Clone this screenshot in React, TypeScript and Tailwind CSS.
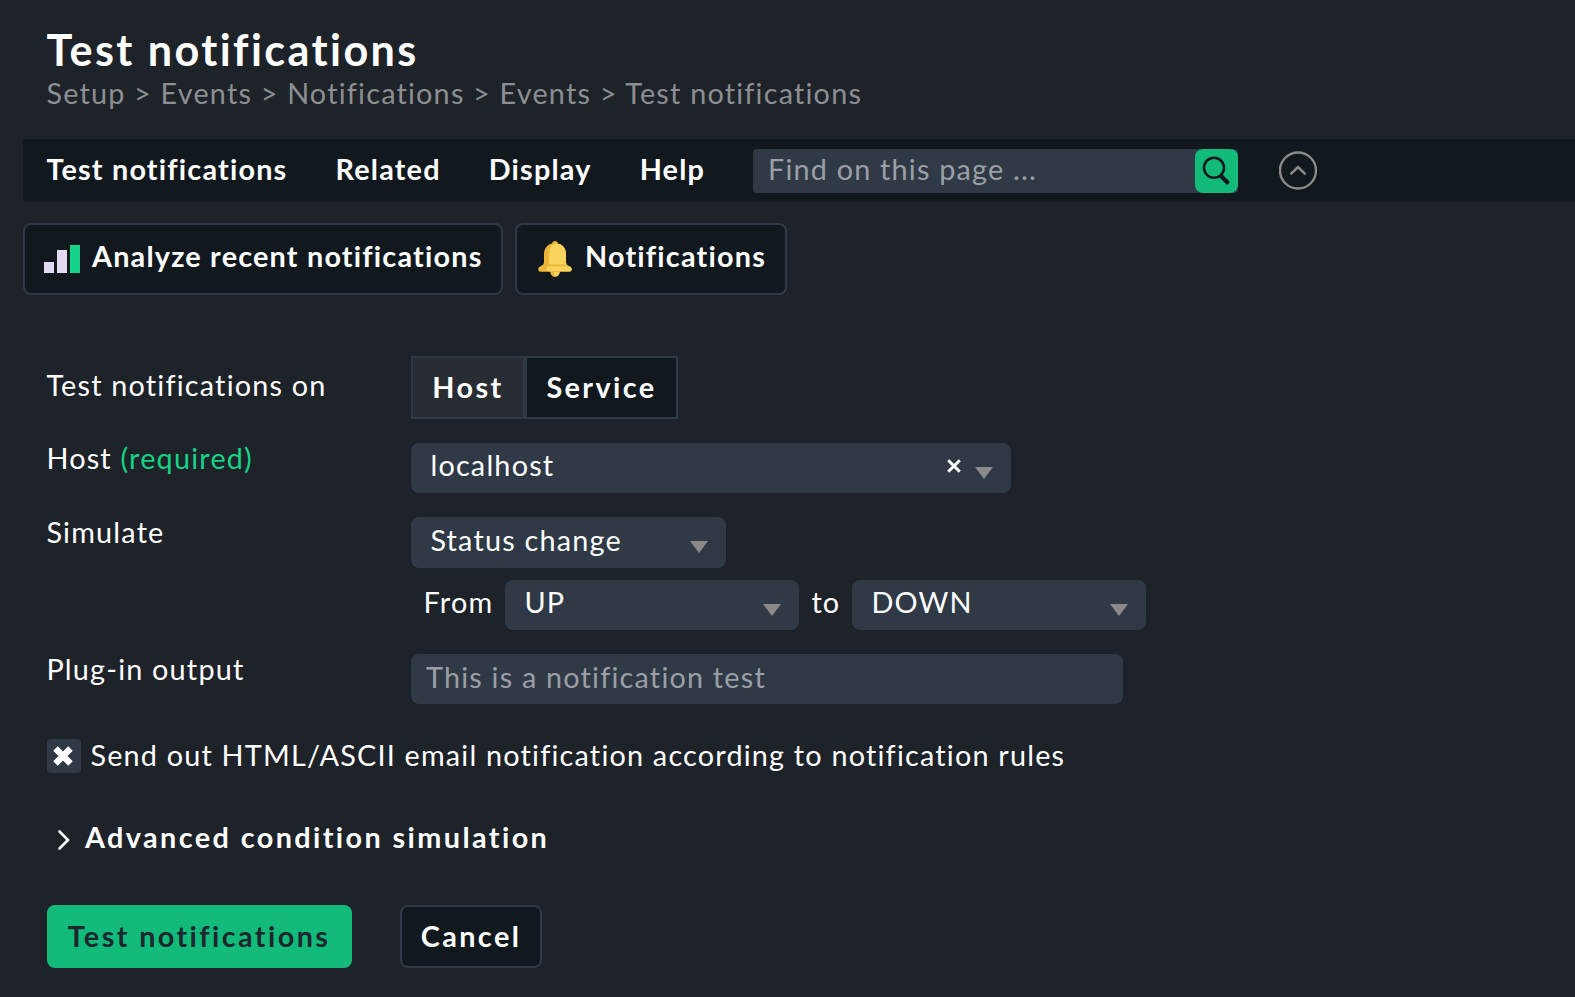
import React from "react";

function Caret({ className = "" }: { className?: string }) {
  return (
    <svg className={`h-3 w-[18px] shrink-0 ${className}`} viewBox="0 0 18 12">
      <path d="M0 0h18L9 12z" fill="#8b8a89" />
    </svg>
  );
}

function Select({ value, className, clearable = false }: { value: string; className: string; clearable?: boolean }) {
  return (
    <button className={`flex items-center rounded-lg bg-[#303946] pr-[18px] pl-[19.4px] text-left ${className}`}>
      <span className="mb-1.5 grow">{value}</span>
      {clearable && (
        <svg className="mr-[14px] mb-[5px] h-[14px] w-[14px]" viewBox="0 0 14 14" stroke="#fff" strokeWidth="3">
          <path d="M1.2 1.200l11.600 11.600M12.800 1.200L1.200 12.800" />
        </svg>
      )}
      <Caret className="mt-[9px]" />
    </button>
  );
}

const menu = ["Test notifications", "Related", "Display", "Help"];

export default function App() {
  return (
    <div className="h-[997px] w-[1575px] overflow-hidden bg-[#1e2229] font-['Lato',sans-serif] text-[28.8px] leading-9 tracking-[1.2px] whitespace-nowrap text-white">
      <header className="h-[139px] pt-[23px] pl-[46.4px]">
        <h1 className="text-[43.2px] leading-[52px] font-bold tracking-[2.4px]">Test notifications</h1>
        <p className="text-[#8c8f91]">Setup &gt; Events &gt; Notifications &gt; Events &gt; Test notifications</p>
      </header>

      <nav className="ml-[23px] flex h-[63px] items-center rounded-l bg-[#11181e] pl-[23.4px]">
        <div className="mb-[3px] flex w-[706.6px] gap-[48px] font-bold">
          {menu.map((m) => (
            <span key={m}>{m}</span>
          ))}
        </div>
        <div className="flex h-11 w-[485px] items-center justify-between rounded-[4px] bg-[#303946]">
          <span className="mb-[3px] pl-[15px] text-[#9b9fa5]">Find on this page ...</span>
          <button className="h-11 w-[43px] rounded-lg bg-[#13bb7b]">
            <svg viewBox="0 0 43 44" fill="none" stroke="#11181e">
              <circle cx="19" cy="18.8" r="10" strokeWidth="2.6" />
              <path d="M25.5 26.500l8 8" strokeWidth="4.2" />
            </svg>
          </button>
        </div>
        <svg className="ml-[41px] h-10 w-10" viewBox="0 0 40 40" fill="none" stroke="#8c8a89">
          <circle cx="19" cy="19.5" r="18" strokeWidth="2.4" />
          <path d="M12.2 22.600l6.800-6.600 6.800 6.600" strokeWidth="2.600" strokeLinecap="round" />
        </svg>
      </nav>

      <div className="mt-[21px] ml-[23px] flex gap-3 font-bold">
        <button className="flex h-[72px] w-[480px] items-center rounded-lg border-2 border-[#303946] bg-[#11181e] pl-[19px]">
          <svg className="h-9 w-9" viewBox="0 0 36 36">
            <path d="M0 21h10v11H0zM13 9h10v23H13z" fill="#e1daf1" />
            <path d="M26 4h10v28H26z" fill="#15d387" />
          </svg>
          <span className="mb-1.5 ml-3">Analyze recent notifications</span>
        </button>
        <button className="flex h-[72px] w-[272px] items-center rounded-lg border-2 border-[#303946] bg-[#11181e] pl-5">
          <svg className="h-9 w-9" viewBox="0 0 36 36">
            <path d="M13 29h10c0 4-2 7-5 7s-5-3-5-7z" fill="#edb637" />
            <path d="M17.500 31h5c0 3-2 4.500-3.500 4-2-.4-2.500-2-1.500-4z" fill="#f8d35e" />
            <path d="M18 0c1.800 0 2.700 1 2.900 2.500C26 3.500 29 8 29 13v8c0 2 1 3 3 4 2 .8 2.700 2 2.700 3.200S34 30.800 32.700 30.800H3.300C2 30.800 1.300 29.400 1.300 28.200S2 25.800 4 25s3-2 3-4v-8c0-5 3-9.500 8.100-10.500C15.300 1 16.200 0 18 0z" fill="#edb637" />
            <path d="M17.500 3C25 2 29 7 29 13v8c0 1 0 1.600.6 2.400H12.500c-.5-1-.5-1.400-.5-2.400v-7c0-5 1.500-10.200 5.500-11zM11 25.200h21.300c1.700.8 2.400 1.900 2.400 3s-.9 2-2 2H11c-2-.8-2-4 0-5z" fill="#f8d35e" />
          </svg>
          <span className="mb-1.5 ml-3">Notifications</span>
        </button>
      </div>

      <main className="pt-[61px] pl-[47px]">
        <div className="flex h-[87px]">
          <span className="mt-[11px] -ml-[0.6px] w-[364.6px]">Test notifications on</span>
          <div className="flex h-[63px] font-bold tracking-[2.4px]">
            <button className="w-[114px] border-2 border-[#303946] bg-[#272d33] pb-px">Host</button>
            <button className="w-[153px] border-2 border-[#303946] bg-[#11181e] pb-px">Service</button>
          </div>
        </div>
        <div className="flex h-[74px]">
          <span className="-mt-[3px] -ml-[0.6px] w-[364.6px]">
            Host <span className="text-[#15d387]">(required)</span>
          </span>
          <Select value="localhost" className="h-[50px] w-[600px]" clearable />
        </div>
        <div className="flex h-[63px]">
          <span className="-mt-[3px] -ml-[0.6px] w-[364.6px]">Simulate</span>
          <Select value="Status change" className="h-[51px] w-[315px]" />
        </div>
        <div className="flex h-[74px] pl-[376.6px]">
          <span className="mt-[4px] w-[81.4px]">From</span>
          <Select value="UP" className="h-[50px] w-[294px]" />
          <span className="mt-[4px] w-[53px] pl-[12.4px]">to</span>
          <Select value="DOWN" className="h-[50px] w-[294px]" />
        </div>
        <div className="flex h-[85px]">
          <span className="-mt-[3px] -ml-[0.6px] w-[364.6px]">Plug-in output</span>
          <div className="h-[50px] w-[712px] rounded-lg bg-[#303946] pt-[5px] pl-[15px] text-[#9b9fa5]">This is a notification test</div>
        </div>
        <div className="flex h-[34px] items-center">
          <span className="flex h-[34px] w-[34px] items-center justify-center rounded-[4px] bg-[#303946] pr-[1.4px] pb-px">
            <svg className="h-5 w-5" viewBox="0 0 20 20" stroke="#fff" strokeWidth="6.400">
              <path d="M2.500 2.500l15 15M17.500 2.500l-15 15" />
            </svg>
          </span>
          <span className="mb-[2px] ml-[9.4px]">Send out HTML/ASCII email notification according to notification rules</span>
        </div>
        <div className="mt-[46px] flex h-[86px] pl-[10.6px] font-bold tracking-[2.4px]">
          <svg className="mt-[11px] h-5 w-3" viewBox="0 0 12 20" fill="none" stroke="#fff" strokeWidth="2.600">
            <path d="M1.500 1.500l8.500 8.500-8.500 8.500" strokeLinecap="round" />
          </svg>
          <span className="ml-[15.4px]">Advanced condition simulation</span>
        </div>
        <div className="flex gap-12 font-bold tracking-[2.4px]">
          <button className="h-[63px] w-[305px] rounded-lg bg-[#13bb7b] pr-px pb-[2px] text-[#1e262e]">Test notifications</button>
          <button className="h-[63px] w-[142px] rounded-lg border-2 border-[#303946] bg-[#11181e] pb-[2px]">Cancel</button>
        </div>
      </main>
    </div>
  );
}
